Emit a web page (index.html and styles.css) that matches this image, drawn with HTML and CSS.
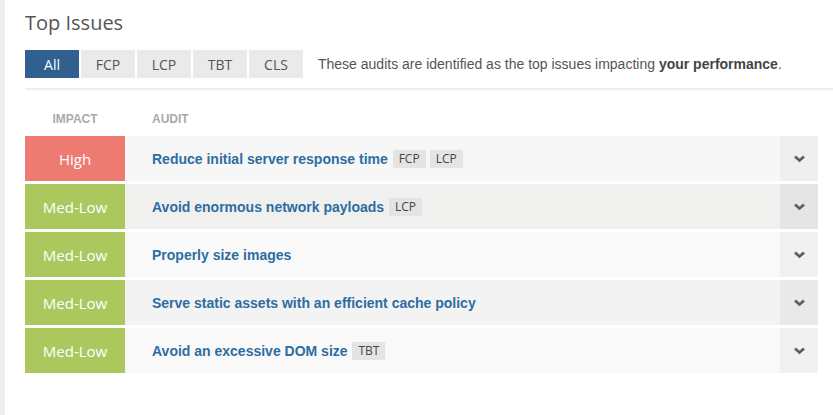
FILE: index.html
```html
<!DOCTYPE html>
<html lang="en">
<head>
    <meta charset="UTF-8">
    <title>Top Issues</title>
    <link rel="stylesheet" href="styles.css">
</head>
<body>

<div class="page">
    <h2 class="title">Top Issues</h2>

    <div class="filters">
        <div class="tabs">
            <button class="tab active">All</button>
            <button class="tab">FCP</button>
            <button class="tab">LCP</button>
            <button class="tab">TBT</button>
            <button class="tab">CLS</button>
        </div>
        <p class="note">These audits are identified as the top issues impacting <b>your performance</b>.</p>
    </div>

    <div class="issues">
        <div class="head">
            <span class="col-impact">Impact</span>
            <span class="col-audit">Audit</span>
        </div>

        <div class="issue shade-1">
            <div class="impact high">High</div>
            <div class="audit">Reduce initial server response time <span class="tag">FCP</span><span class="tag">LCP</span></div>
            <div class="toggle"><svg viewBox="0 0 12 8" width="13" height="8"><path d="M1.5 1.5 6 5.5 10.5 1.5" fill="none" stroke="#5f5f5f" stroke-width="2.8"/></svg></div>
        </div>

        <div class="issue shade-2">
            <div class="impact medlow">Med-Low</div>
            <div class="audit">Avoid enormous network payloads <span class="tag">LCP</span></div>
            <div class="toggle"><svg viewBox="0 0 12 8" width="13" height="8"><path d="M1.5 1.5 6 5.5 10.5 1.5" fill="none" stroke="#5f5f5f" stroke-width="2.8"/></svg></div>
        </div>

        <div class="issue shade-3">
            <div class="impact medlow">Med-Low</div>
            <div class="audit">Properly size images</div>
            <div class="toggle"><svg viewBox="0 0 12 8" width="13" height="8"><path d="M1.5 1.5 6 5.5 10.5 1.5" fill="none" stroke="#5f5f5f" stroke-width="2.8"/></svg></div>
        </div>

        <div class="issue shade-4">
            <div class="impact medlow">Med-Low</div>
            <div class="audit">Serve static assets with an efficient cache policy</div>
            <div class="toggle"><svg viewBox="0 0 12 8" width="13" height="8"><path d="M1.5 1.5 6 5.5 10.5 1.5" fill="none" stroke="#5f5f5f" stroke-width="2.8"/></svg></div>
        </div>

        <div class="issue shade-3">
            <div class="impact medlow">Med-Low</div>
            <div class="audit">Avoid an excessive DOM size <span class="tag">TBT</span></div>
            <div class="toggle"><svg viewBox="0 0 12 8" width="13" height="8"><path d="M1.5 1.5 6 5.5 10.5 1.5" fill="none" stroke="#5f5f5f" stroke-width="2.8"/></svg></div>
        </div>
    </div>
</div>

</body>
</html>
```

FILE: styles.css
```css
body {
    margin: 0;
    background-color: #fff;
    font-family: "Open Sans", Arial, sans-serif;
    color: #555;
}

.page {
    min-height: 415px;
    border-left: 5px solid #eee;
    padding: 8px 0 0 20px;
    box-sizing: border-box;
}

.title {
    margin: 0 0 12px 0;
    font-size: 20px;
    font-weight: 400;
    line-height: 30px;
    color: #555;
}

.filters {
    display: flex;
    align-items: center;
    padding-bottom: 10px;
    border-bottom: 2px solid #eee;
}

.tabs {
    display: flex;
    gap: 2px;
}

.tab {
    width: 54px;
    height: 28px;
    padding: 0;
    border: none;
    background-color: #eaeaea;
    color: #555;
    font-family: "Open Sans", Arial, sans-serif;
    font-size: 14px;
    cursor: pointer;
}

.tab.active {
    background-color: #30608f;
    color: #fff;
}

.note {
    margin: 0 0 0 15px;
    font-family: "Liberation Sans", Arial, sans-serif;
    font-size: 14px;
    color: #555;
}

.note b {
    color: #444;
}

.issues {
    width: 793px;
    padding-top: 22px;
}

.head {
    display: flex;
    font-family: "Liberation Sans", Arial, sans-serif;
    font-size: 12px;
    font-weight: bold;
    text-transform: uppercase;
    color: #aaa;
    height: 24px;
}

.col-impact {
    width: 100px;
    text-align: center;
}

.col-audit {
    padding-left: 27px;
}

.issue {
    display: flex;
    height: 45px;
    margin-bottom: 3px;
}

.impact {
    width: 100px;
    display: flex;
    align-items: center;
    justify-content: center;
    color: #fff;
    font-size: 15px;
}

.impact.high {
    background-color: #ee7b72;
}

.impact.medlow {
    background-color: #aac85e;
}

.audit {
    flex: 1;
    display: flex;
    align-items: center;
    padding-left: 27px;
    font-family: "Liberation Sans", Arial, sans-serif;
    font-size: 14px;
    font-weight: bold;
    color: #2d6ca2;
    white-space: pre;
}

.tag {
    display: inline-block;
    margin-left: 1px;
    margin-right: 3px;
    padding: 0 6px;
    line-height: 18px;
    background-color: #e4e4e4;
    color: #444;
    font-family: "Open Sans", Arial, sans-serif;
    font-size: 12px;
    font-weight: 400;
}

.toggle {
    width: 38px;
    display: flex;
    align-items: center;
    justify-content: center;
}

.shade-1 .audit { background-color: #f7f7f7; }
.shade-1 .toggle { background-color: #efefef; }
.shade-2 .audit { background-color: #f0f0ef; }
.shade-2 .toggle { background-color: #e5e5e5; }
.shade-3 .audit { background-color: #f9f9f9; }
.shade-3 .toggle { background-color: #f1f1f1; }
.shade-4 .audit { background-color: #f3f3f3; }
.shade-4 .toggle { background-color: #e9e9e9; }
```
